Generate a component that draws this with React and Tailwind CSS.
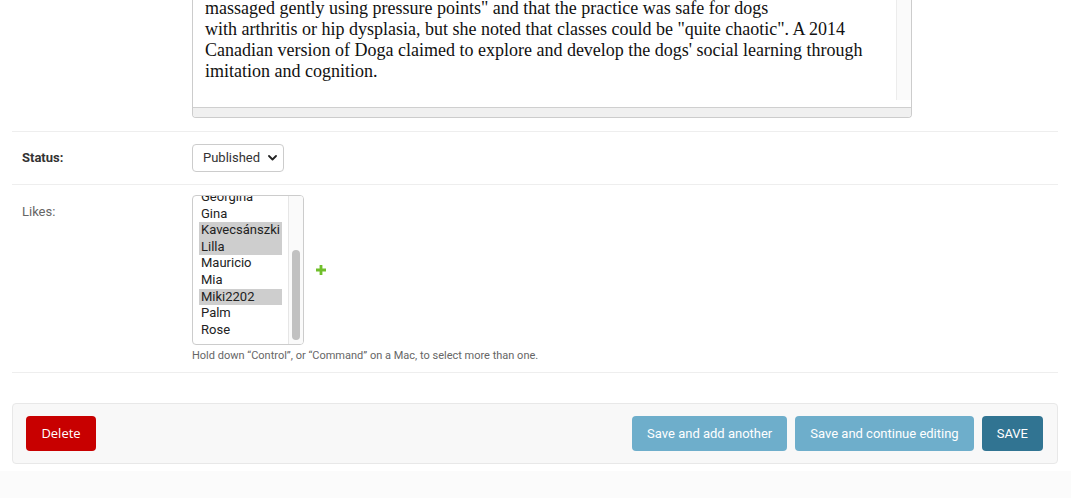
import React from 'react';

const body = [
  'massaged gently using pressure points" and that the practice was safe for dogs',
  'with arthritis or hip dysplasia, but she noted that classes could be "quite chaotic". A 2014',
  "Canadian version of Doga claimed to explore and develop the dogs' social learning through",
  'imitation and cognition.',
];

const users = [
  { name: 'Georgina', selected: false },
  { name: 'Gina', selected: false },
  { name: 'Kavecsánszki', selected: true },
  { name: 'Lilla', selected: true },
  { name: 'Mauricio', selected: false },
  { name: 'Mia', selected: false },
  { name: 'Miki2202', selected: true },
  { name: 'Palm', selected: false },
  { name: 'Rose', selected: false },
];

function Chevron() {
  return (
    <svg width="9" height="6" viewBox="0 0 9 6" className="ml-[8px]">
      <path d="M1 1 L4.5 4.5 L8 1" fill="none" stroke="#222" strokeWidth="1.8" strokeLinecap="round" strokeLinejoin="round" />
    </svg>
  );
}

function AddIcon() {
  return (
    <svg width="10" height="10" viewBox="0 0 10 10">
      <path d="M3.6 0 h2.8 v3.6 h3.6 v2.8 h-3.6 v3.6 h-2.8 v-3.6 h-3.6 v-2.8 h3.6 z" fill="#70bf2b" />
    </svg>
  );
}

export default function App() {
  return (
    <div className="min-h-[498px] bg-white font-['Roboto',sans-serif] text-[13px] text-[#333] overflow-hidden">
      <div className="pl-[12px] pr-[13px]">
        {/* body textarea, scrolled */}
        <div className="border-b border-[#eee] pb-[13px] pl-[180px]">
          <div className="w-[720px] border border-t-0 border-[#ccc] rounded-b-[4px] bg-white overflow-hidden">
            <div className="flex h-[100px]">
              <div className="flex-1 pl-[12px] -mt-[2px] font-['Liberation_Serif',serif] text-[18px] leading-[21px] text-[#111]">
                {body.map((line) => (
                  <div key={line} className="whitespace-pre">{line}</div>
                ))}
              </div>
              <div className="w-[15px] bg-[#fafafa] border-l border-[#ececec]" />
            </div>
            <div className="h-[7px]" />
            <div className="h-[10px] bg-[#f0f0f0] border-t border-[#cfcfcf]" />
          </div>
        </div>

        {/* status */}
        <div className="flex items-center border-b border-[#eee] py-[10px] pl-[10px] h-[53px]">
          <label className="w-[170px] font-bold text-[#333]">Status:</label>
          <div className="flex items-center h-[28px] w-[92px] border border-[#ccc] rounded-[4px] pl-[10px] text-[13px] text-[#333] bg-white">
            Published
            <Chevron />
          </div>
        </div>

        {/* likes */}
        <div className="flex border-b border-[#eee] pt-[10px] pb-[9px] pl-[10px]">
          <label className="w-[170px] pt-[7px] text-[#666]">Likes:</label>
          <div>
            <div className="flex items-center">
              <div className="flex w-[112px] h-[150px] border border-[#ccc] rounded-[4px] overflow-hidden bg-white">
                <div className="flex-1 pl-[6px] pr-[6px] -mt-[7px] text-[13px] leading-[16.6px] text-[#222]">
                  {users.map((u) => (
                    <div key={u.name} className={`px-[2px] ${u.selected ? 'bg-[#cecece]' : ''}`}>
                      {u.name}
                    </div>
                  ))}
                </div>
                <div className="w-[15px] bg-[#fafafa] border-l border-[#e6e6e6] pt-[54px] pb-[4px] flex justify-center">
                  <div className="w-[8px] h-[90px] rounded-full bg-[#c1c1c1]" />
                </div>
              </div>
              <div className="ml-[12px]">
                <AddIcon />
              </div>
            </div>
            <p className="mt-[4px] text-[11px] leading-[14px] text-[#666]">
              Hold down “Control”, or “Command” on a Mac, to select more than one.
            </p>
          </div>
        </div>

        {/* submit row */}
        <div className="mt-[30px] flex items-center justify-between bg-[#f8f8f8] border border-[#e8e8e8] rounded-[4px] pl-[13px] pr-[14px] py-[12px]">
          <button className="h-[35px] w-[70px] rounded-[4px] bg-[#c80000] text-white text-[13px] font-['Open_Sans',sans-serif]">
            Delete
          </button>
          <div className="flex gap-[8px]">
            <button className="h-[35px] px-[15px] rounded-[4px] bg-[#6eaecb] text-white text-[13px]">
              Save and add another
            </button>
            <button className="h-[35px] px-[15px] rounded-[4px] bg-[#6eaecb] text-white text-[13px]">
              Save and continue editing
            </button>
            <button className="h-[35px] px-[15px] rounded-[4px] bg-[#317492] text-white text-[13px]">
              SAVE
            </button>
          </div>
        </div>
      </div>
      <div className="mt-[7px] h-[40px] bg-[#fbfbfb]" />
    </div>
  );
}
